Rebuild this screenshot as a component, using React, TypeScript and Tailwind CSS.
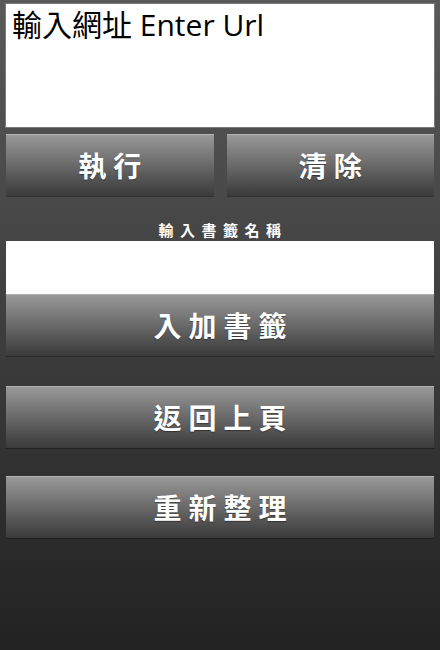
import React from "react";

const cjk = { fontFamily: '"Noto Sans CJK TC", "Noto Sans", sans-serif' };

function Btn({ label, className = "" }: { label: string; className?: string }) {
  return (
    <div
      className={
        "flex h-[62px] items-center justify-center bg-gradient-to-b from-[#9a9a9a] via-[#6a6a6a] to-[#3a3a3a] shadow-[inset_0_1px_0_rgba(255,255,255,0.25),0_1px_0_rgba(0,0,0,0.3)] " +
        className
      }
    >
      <span
        className="pl-[7px] text-[28px] font-bold leading-none tracking-[7px] text-white [text-shadow:0_1px_1px_rgba(0,0,0,0.4)]"
        style={cjk}
      >
        {label}
      </span>
    </div>
  );
}

export default function App() {
  return (
    <div className="flex h-[650px] w-[440px] flex-col bg-gradient-to-b from-[#5a5a5a] via-[#3e3e3e] to-[#222222] px-[6px] pt-[4px]">
      <div className="h-[123px] bg-white px-[6px] pt-[4px] shadow-[0_0_0_1px_#7a7a7a]">
        <span
          className="text-[30px] leading-[34px] text-black"
          style={{ fontFamily: '"Open Sans", "Noto Sans CJK TC", sans-serif' }}
        >
          輸入網址 Enter Url
        </span>
      </div>
      <div className="mt-[7px] flex gap-[13px]">
        <Btn label="執行" className="flex-1" />
        <Btn label="清除" className="flex-1" />
      </div>
      <div className="flex h-[45px] items-end justify-center pb-[4px]">
        <span
          className="pl-[6px] text-[15px] font-bold leading-none tracking-[6.5px] text-white"
          style={cjk}
        >
          輸入書籤名稱
        </span>
      </div>
      <div className="h-[53px] bg-white" />
      <Btn label="入加書籤" />
      <Btn label="返回上頁" className="mt-[30px]" />
      <Btn label="重新整理" className="mt-[28px]" />
    </div>
  );
}
